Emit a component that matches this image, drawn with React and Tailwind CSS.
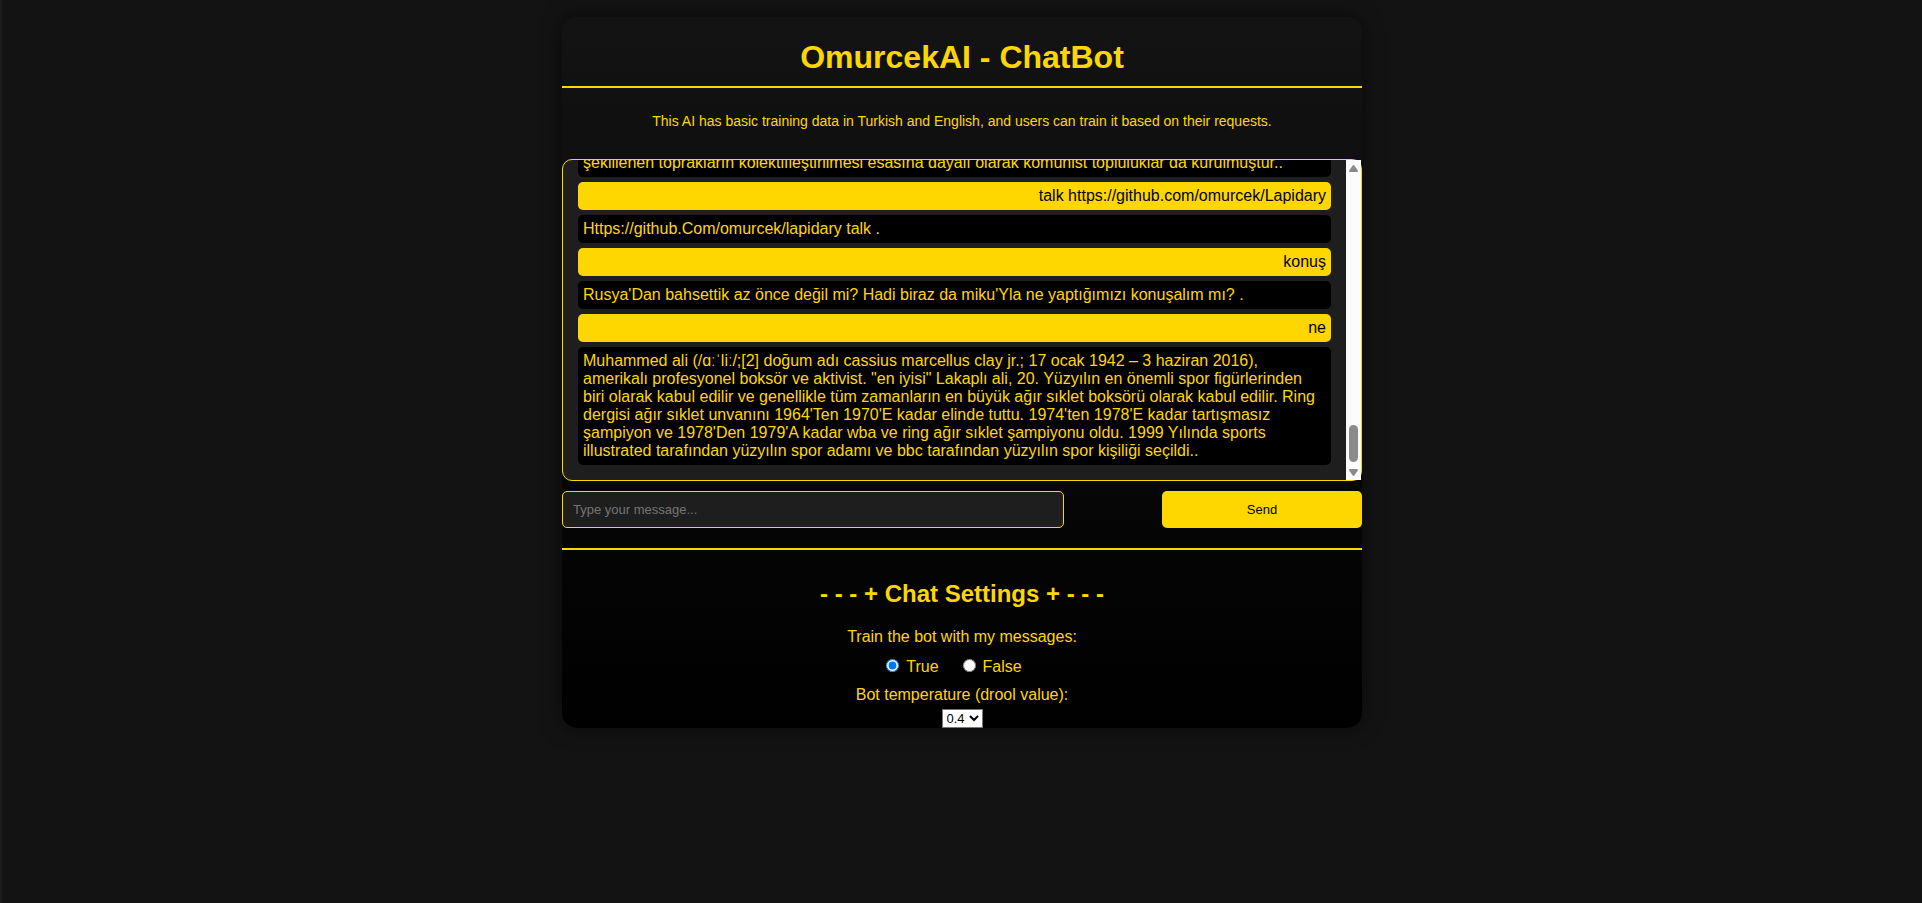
import React, { useState } from "react";

const messages = [
  {
    from: "bot",
    text: "şekillenen toprakların kolektifleştirilmesi esasına dayalı olarak komünist topluluklar da kurulmuştur..",
  },
  { from: "user", text: "talk https://github.com/omurcek/Lapidary" },
  { from: "bot", text: "Https://github.Com/omurcek/lapidary talk ." },
  { from: "user", text: "konuş" },
  {
    from: "bot",
    text: "Rusya'Dan bahsettik az önce değil mi? Hadi biraz da miku'Yla ne yaptığımızı konuşalım mı? .",
  },
  { from: "user", text: "ne" },
  {
    from: "bot",
    text: "Muhammed ali (/ɑːˈliː/;[2] doğum adı cassius marcellus clay jr.; 17 ocak 1942 – 3 haziran 2016), amerikalı profesyonel boksör ve aktivist. \"en iyisi\" Lakaplı ali, 20. Yüzyılın en önemli spor figürlerinden biri olarak kabul edilir ve genellikle tüm zamanların en büyük ağır sıklet boksörü olarak kabul edilir. Ring dergisi ağır sıklet unvanını 1964'Ten 1970'E kadar elinde tuttu. 1974'ten 1978'E kadar tartışmasız şampiyon ve 1978'Den 1979'A kadar wba ve ring ağır sıklet şampiyonu oldu. 1999 Yılında sports illustrated tarafından yüzyılın spor adamı ve bbc tarafından yüzyılın spor kişiliği seçildi..",
  },
];

function Message({ from, text }) {
  return (
    <p
      className={
        from === "user"
          ? "rounded-[5px] bg-[#ffd700] p-[5px] text-right text-black"
          : "rounded-[5px] bg-black p-[5px]"
      }
    >
      {text}
    </p>
  );
}

function ScrollTrack() {
  return (
    <div aria-hidden="true" className="flex w-[15px] shrink-0 flex-col items-center bg-[#fcfcfc] py-1">
      <svg width="9" height="8" viewBox="0 0 9 8" className="fill-[#8b8b8b]">
        <path d="M3.7 1.4Q4.5 .4 5.3 1.4L8.7 6.2Q9.3 8 8 8H1Q-.3 8 .3 6.2Z" />
      </svg>
      <div className="grow" />
      <div className="mb-[7px] h-[37px] w-[9px] rounded-full bg-[#8b8b8b]" />
      <svg width="9" height="7" viewBox="0 0 9 7" className="fill-[#8b8b8b]">
        <path d="M3.7 6.6Q4.5 7.4 5.3 6.6L8.7 1.8Q9.3 0 8 0H1Q-.3 0 .3 1.8Z" />
      </svg>
    </div>
  );
}

function TrainOption({ label, checked, onChange }) {
  return (
    <label className="flex items-center">
      <input type="radio" name="train" checked={checked} onChange={onChange} className="mr-[7px] mb-1 size-[13px]" />
      {label}
    </label>
  );
}

export default function App() {
  const [train, setTrain] = useState(true);
  const [draft, setDraft] = useState("");

  return (
    <div className="min-h-screen border-l-2 border-[#1b1b20] bg-[#131313] pt-[17px] font-['Liberation_Sans',Arial,sans-serif] text-base leading-[18px] text-[#ffd700]">
      <main className="mx-auto max-w-[800px] rounded-[15px] bg-linear-to-b/srgb from-[#131313] to-black shadow-[0_0_20px_rgba(0,0,0,0.5)]">
        <h1 className="border-b-2 border-[#ffd700] pt-[22px] pb-2.5 text-center text-[32px] leading-[37px] font-bold">
          OmurcekAI - ChatBot
        </h1>
        <p className="pt-[25px] pb-[30px] text-center text-sm leading-4">
          This AI has basic training data in Turkish and English, and users can train it based on their requests.
        </p>

        <section aria-label="Conversation" className="flex h-[322px] rounded-[10px] border border-[#ffd700] bg-[#1e1e1e]">
          <div className="flex h-full grow flex-col-reverse overflow-y-auto p-[15px] pt-0 [scrollbar-width:none]">
            <div className="flex flex-col gap-[5px]">
              {messages.map((m) => (
                <Message key={m.text} from={m.from} text={m.text} />
              ))}
            </div>
          </div>
          <ScrollTrack />
        </section>

        <form
          className="flex justify-between border-b-2 border-[#ffd700] pt-2.5 pb-5"
          onSubmit={(e) => {
            e.preventDefault();
            setDraft("");
          }}
        >
          <input
            type="text"
            aria-label="Message"
            placeholder="Type your message..."
            value={draft}
            onChange={(e) => setDraft(e.target.value)}
            className="h-[37px] w-[502px] rounded-[5px] border border-[#ffd700] bg-[#1e1e1e] px-2.5 text-[13px] placeholder:text-[#757575]"
          />
          <button type="submit" className="h-[37px] w-1/4 rounded-[5px] bg-[#ffd700] text-[13px] text-black">
            Send
          </button>
        </form>

        <section className="flex flex-col items-center pt-[30px]">
          <h2 className="text-2xl leading-7 font-bold">- - - + Chat Settings + - - -</h2>
          <fieldset className="mt-5">
            <legend>Train the bot with my messages:</legend>
            <div className="flex justify-center gap-6 pt-3 pr-4">
              <TrainOption label="True" checked={train} onChange={() => setTrain(true)} />
              <TrainOption label="False" checked={!train} onChange={() => setTrain(false)} />
            </div>
          </fieldset>
          <label htmlFor="temperature" className="pt-2.5 pb-[5px]">
            Bot temperature (drool value):
          </label>
          <select
            id="temperature"
            defaultValue="0.4"
            className="h-[19px] w-[41px] border border-[#767676] bg-white text-[13px] leading-4 text-black"
          >
            {["0.1", "0.2", "0.3", "0.4", "0.5", "0.6", "0.7", "0.8", "0.9", "1.0"].map((v) => (
              <option key={v}>{v}</option>
            ))}
          </select>
        </section>
      </main>
    </div>
  );
}
